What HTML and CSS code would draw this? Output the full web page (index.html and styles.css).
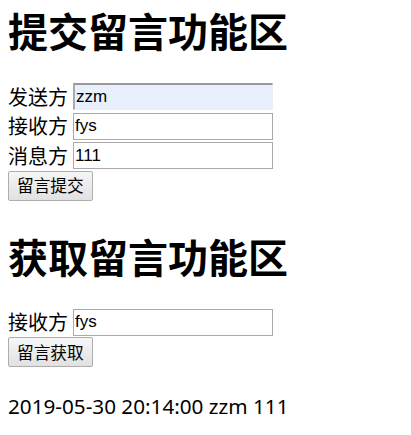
FILE: index.html
```html
<!DOCTYPE html>
<html lang="zh">
<head>
<meta charset="utf-8">
<title>留言</title>
<link rel="stylesheet" href="styles.css">
</head>
<body>
<section class="block send">
  <h1 class="title">提交留言功能区</h1>
  <div class="row"><span class="label">发送方</span><input class="field autofill" type="text" value="zzm"></div>
  <div class="row"><span class="label">接收方</span><input class="field" type="text" value="fys"></div>
  <div class="row"><span class="label">消息方</span><input class="field" type="text" value="111"></div>
  <button class="btn" type="button">留言提交</button>
</section>
<section class="block fetch">
  <h1 class="title">获取留言功能区</h1>
  <div class="row"><span class="label">接收方</span><input class="field" type="text" value="fys"></div>
  <button class="btn" type="button">留言获取</button>
  <p class="result">2019-05-30 20:14:00 zzm 111</p>
</section>
</body>
</html>
```
FILE: styles.css
```css
html, body {
  background: #fff;
}
body {
  margin: 0 8px;
  color: #000;
  font-family: "Noto Sans CJK SC", "Noto Sans", sans-serif;
  font-size: 20px;
}
.block {
  display: flex;
  flex-direction: column;
  align-items: flex-start;
}
.send {
  padding-top: 0;
}
.fetch {
  padding-top: 25px;
}
.title {
  margin: 0 0 22px;
  font-size: 40px;
  font-weight: 700;
  line-height: 60px;
}
.row {
  display: flex;
  align-items: center;
  gap: 5px;
  height: 29.5px;
}
.label {
  line-height: 1;
}
.field {
  box-sizing: border-box;
  width: 200px;
  height: 27px;
  margin: 0;
  padding: 1px 1px;
  border: 1px solid #a9a9a9;
  background: #fff;
  font-family: "Liberation Sans", Arial, sans-serif;
  font-size: 17px;
  color: #000;
}
.field.autofill {
  background: #e8f0fe;
  border-width: 2px 1px 1px 2px;
  border-color: #999 #eeeeee #eeeeee #aaa;
}
.btn {
  box-sizing: border-box;
  height: 30px;
  margin: 0;
  padding: 0 8px;
  border: 1px solid #adadad;
  border-radius: 2px;
  background: linear-gradient(#f6f6f6, #e1e1e1);
  font-family: "Noto Sans CJK SC", sans-serif;
  font-size: 16.7px;
  line-height: 1;
  color: #000;
}
.result {
  margin: 25px 0 0;
  font-family: "Noto Sans", "Noto Sans CJK SC", sans-serif;
  font-size: 20.7px;
  line-height: 28px;
}
```
